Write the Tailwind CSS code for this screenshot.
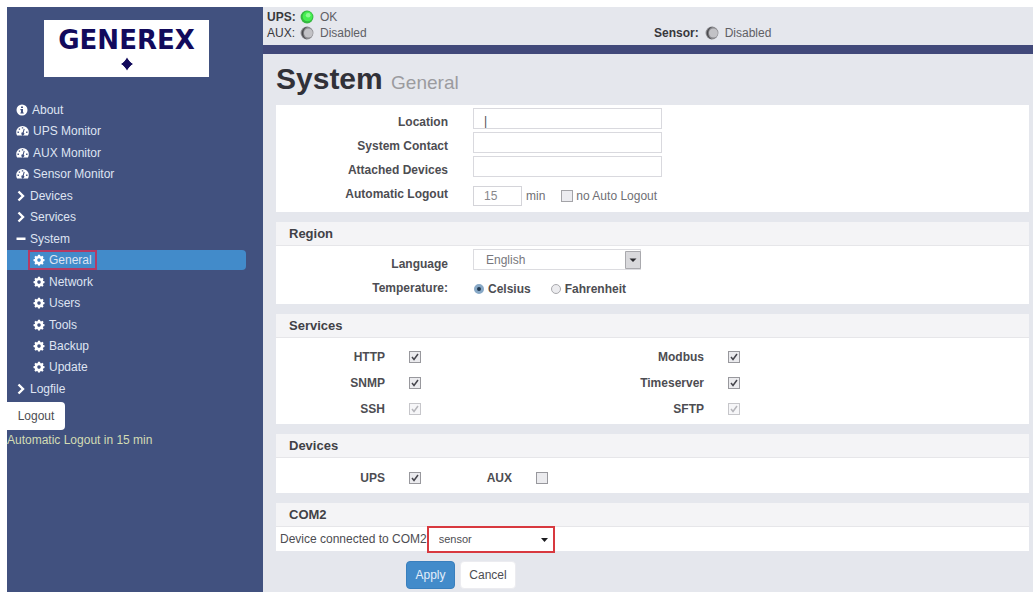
<!DOCTYPE html>
<html lang="en">
<head>
  <meta charset="UTF-8" />
  <meta name="viewport" content="width=device-width, initial-scale=1.0"/>
  <title>System - General</title>
  <script src="https://cdn.jsdelivr.net/npm/@tailwindcss/browser@4"></script>
</head>
<body class="bg-white min-h-screen flex pl-[7px] pt-[7px] pr-[2px] text-[12px] leading-4 text-[#4d4d52] font-['Liberation_Sans',Arial,sans-serif]">

  <!-- icons shared by the menu -->
  <svg class="hidden">
    <symbol id="info" viewBox="0 0 12 12"><path fill-rule="evenodd" d="M6 .5a5.5 5.5 0 1 0 0 11a5.5 5.5 0 0 0 0-11zM5 2.4h2v1.6H5zM4.4 5H7v3.4h.7v1.2H4.4V8.400H5V6.200h-.6z"/></symbol>
    <symbol id="gauge" viewBox="0 0 13 12"><path fill-rule="evenodd" d="M6.500 1A6.300 6.300 0 0 0 .2 7.300c0 1.200.3 2.300.9 3.200h10.800c.6-.9.9-2 .9-3.200A6.300 6.300 0 0 0 6.500 1zM5.800 2.200h1.400v1.400H5.800zM2.800 3.500h1.300v1.300H2.800zM1.500 6.600h1.400V8H1.500zM10.100 6.600h1.400V8h-1.400zM7.700 3.700l1 .3-1 3.600a1.500 1.500 0 1 1-1-.3z"/></symbol>
    <symbol id="chevron" viewBox="0 0 10 12"><path d="M2.500 1.500L7 6l-4.500 4.500" fill="none" stroke="currentColor" stroke-width="2.400"/></symbol>
    <symbol id="minus" viewBox="0 0 10 12"><path d="M.5 4.500h9v2.500h-9z"/></symbol>
    <symbol id="cog" viewBox="0 0 12 12"><path fill-rule="evenodd" d="M5 .8h2l.3 1.300.8.300 1.200-.7 1.300 1.300-.7 1.200.3.800 1.300.3v1.800l-1.300.3-.3.800.7 1.200-1.300 1.300-1.200-.7-.8.300L7 11.500H5l-.3-1.200-.8-.3-1.200.7-1.300-1.300.7-1.200-.3-.8L.5 7.100V5.300L1.800 5l.3-.8L1.400 3l1.300-1.300 1.200.7.800-.3zM6 4.300a1.800 1.800 0 1 0 0 3.600a1.800 1.800 0 0 0 0-3.600z"/></symbol>
    <symbol id="led" viewBox="0 0 12 12">
      <circle cx="6" cy="6" r="5.500" fill="#8a8a8e"/>
      <path d="M6.500.6A5.500 5.500 0 0 0 6 11.500A6 6 0 0 1 6.500.6z" fill="#4a4a4e"/>
      <circle cx="7.200" cy="6" r="3.800" fill="#c2c2c6"/>
    </symbol>
  </svg>

  <!-- sidebar -->
  <aside class="w-64 shrink-0 bg-[#41517f] text-[#dfe4f2]">
    <div class="ml-[37px] mt-[13px] w-[165px] h-[57px] pt-2 bg-white text-[#120a5c] flex flex-col items-center">
      <div class="text-[26px] leading-6 font-bold font-['DejaVu_Sans',sans-serif]">GENEREX</div>
      <svg class="mt-[5px] w-3 h-[14px]" viewBox="0 0 12 14" fill="currentColor"><path d="M6 .5C7 3 9 5.500 12 7C9 8.500 7 11 6 13.500C5 11 3 8.500 0 7C3 5.500 5 3 6 .5z"/><path d="M6 1.500L11 7L6 12.500L1 7z"/></svg>
    </div>

    <nav class="mt-[23px]">
      <ul class="h-[299px] flex flex-col justify-between [&_a]:flex [&_a]:items-center [&_a]:h-5 [&_svg]:fill-current [&_svg]:text-white [&_svg]:h-3">
        <li><a href="#" class="pl-[9px] gap-1"><svg class="w-3"><use href="#info"/></svg>About</a></li>
        <li><a href="#" class="pl-[9px] gap-1"><svg class="w-[13px]"><use href="#gauge"/></svg>UPS Monitor</a></li>
        <li><a href="#" class="pl-[9px] gap-1"><svg class="w-[13px]"><use href="#gauge"/></svg>AUX Monitor</a></li>
        <li><a href="#" class="pl-[9px] gap-1"><svg class="w-[13px]"><use href="#gauge"/></svg>Sensor Monitor</a></li>
        <li><a href="#" class="pl-[9px] gap-1"><svg class="w-[10px]"><use href="#chevron"/></svg>Devices</a></li>
        <li><a href="#" class="pl-[9px] gap-1"><svg class="w-[10px]"><use href="#chevron"/></svg>Services</a></li>
        <li><a href="#" class="pl-[9px] gap-1"><svg class="w-[10px]"><use href="#minus"/></svg>System</a></li>
        <li class="mr-[17px] pl-[21px] bg-[#428bca] rounded-r"><a href="#" class="w-[69px] pl-[3px] gap-1 border-2 border-[#b43a64]"><svg class="w-3 shrink-0"><use href="#cog"/></svg>General</a></li>
        <li><a href="#" class="pl-[26px] gap-1"><svg class="w-3"><use href="#cog"/></svg>Network</a></li>
        <li><a href="#" class="pl-[26px] gap-1"><svg class="w-3"><use href="#cog"/></svg>Users</a></li>
        <li><a href="#" class="pl-[26px] gap-1"><svg class="w-3"><use href="#cog"/></svg>Tools</a></li>
        <li><a href="#" class="pl-[26px] gap-1"><svg class="w-3"><use href="#cog"/></svg>Backup</a></li>
        <li><a href="#" class="pl-[26px] gap-1"><svg class="w-3"><use href="#cog"/></svg>Update</a></li>
        <li><a href="#" class="pl-[9px] gap-1"><svg class="w-[10px]"><use href="#chevron"/></svg>Logfile</a></li>
      </ul>
    </nav>
    <button class="mt-[3px] w-[58px] h-7 bg-white rounded-r-sm text-[#4d4d52]">Logout</button>
    <p class="mt-0.5 text-[#d3dcb4]">Automatic Logout in 15 min</p>
  </aside>

  <div class="flex-1 flex flex-col bg-[#e5e7ed]">
    <!-- status bar -->
    <header class="h-[47px] pl-1 pt-[2px] border-b-9 border-[#41497a] grid grid-cols-[387px_1fr] content-start text-[#606065]">
      <div class="flex items-center gap-1.5">
        <b class="w-[27px] text-[#38383c]">UPS:</b>
        <svg class="w-3.5 h-3.5" viewBox="0 0 12 12"><circle cx="6" cy="6" r="5.500" fill="#35b840"/><circle cx="6.500" cy="5.500" r="4.200" fill="#45ee50"/><circle cx="7" cy="4.500" r="2" fill="#8dfa92"/></svg>
        OK
      </div>
      <div></div>
      <div class="flex items-center gap-1.5">
        <span class="w-[27px] text-[#38383c]">AUX:</span>
        <svg class="w-3.5 h-3.5"><use href="#led"/></svg>
        Disabled
      </div>
      <div class="flex items-center gap-1.5">
        <b class="text-[#38383c]">Sensor:</b>
        <svg class="w-3.5 h-3.5"><use href="#led"/></svg>
        Disabled
      </div>
    </header>

    <main class="pl-[13px] pr-1">
      <h1 class="pt-2 h-[51px] text-[30px] leading-[34px] font-bold text-[#313138]">System <small class="text-[19px] font-normal text-[#9b9b9f]">General</small></h1>

      <form class="flex flex-col gap-[10px] [&_section]:bg-white [&_h2]:h-6 [&_h2]:pl-[13px] [&_h2]:bg-[#f4f4f6] [&_h2]:border-b [&_h2]:border-[#e6e6e9] [&_h2]:text-[13px] [&_h2]:leading-[23px] [&_h2]:font-bold [&_h2]:text-[#414146]">
        <section class="h-[107px] pt-[3px] grid grid-cols-[172px_1fr] auto-rows-[24px] gap-x-[25px] items-start">
          <label for="location" class="pt-1.5 text-right font-bold">Location</label>
          <input id="location" type="text" value="|" class="w-[189px] h-[21px] px-2.5 pt-1 border border-[#d9d9de] bg-white">
          <label for="contact" class="pt-1.5 text-right font-bold">System Contact</label>
          <input id="contact" type="text" class="w-[189px] h-[21px] px-2.5 border border-[#d9d9de] bg-white">
          <label for="attached" class="pt-1.5 text-right font-bold">Attached Devices</label>
          <input id="attached" type="text" class="w-[189px] h-[21px] px-2.5 border border-[#d9d9de] bg-white">
          <label for="logout" class="pt-1.5 text-right font-bold">Automatic Logout</label>
          <div class="pt-1.5 flex items-center text-[#6f6f74]">
            <input id="logout" type="text" value="15" class="w-[49px] h-5 px-2.5 border border-[#d4d4d9] bg-white text-[#88888c]">
            <span class="ml-1">min</span>
            <input id="noauto" type="checkbox" class="ml-4 appearance-none w-3 h-3 border border-[#a4a4a8] bg-[#ececf0]">
            <label for="noauto" class="ml-[3px]">no Auto Logout</label>
          </div>
        </section>

        <section>
          <h2>Region</h2>
          <div class="h-[58px] pt-[3px] grid grid-cols-[172px_1fr] auto-rows-[24px] gap-x-[25px] items-start">
            <label for="language" class="pt-[7px] text-right font-bold">Language</label>
            <div class="relative w-[168px]">
              <select id="language" class="appearance-none w-full h-[21px] pl-3 border border-[#dcdce0] bg-white text-[#77777c]">
                <option>English</option>
              </select>
              <svg class="absolute right-0 top-0.5 w-4 h-[18px] pointer-events-none" viewBox="0 0 16 18"><path d="M.5.5h15v17H.5z" fill="#d9d9dc" stroke="#a9a9ad"/><path d="M4.500 7.500h7L8 11z" fill="#2b2b2f"/></svg>
            </div>
            <span class="pt-[7px] text-right font-bold">Temperature:</span>
            <div class="pt-2 flex items-center font-bold">
              <input id="celsius" type="radio" name="temp" checked class="ml-px appearance-none w-2.5 h-2.5 rounded-full border border-[#a7b4c2] bg-[#dfe9f2] checked:border-3 checked:bg-[#20384f] checked:border-[#87a8c6]">
              <label for="celsius" class="ml-1">Celsius</label>
              <input id="fahrenheit" type="radio" name="temp" class="ml-5 appearance-none w-2.5 h-2.5 rounded-full border border-[#a9a9ad] bg-[#ececef]">
              <label for="fahrenheit" class="ml-1">Fahrenheit</label>
            </div>
          </div>
        </section>

        <section>
          <h2>Services</h2>
          <div class="h-[86px] pt-1.5 grid grid-cols-[109px_12px_259px_12px] auto-rows-[26px] gap-x-6 items-center [&_label]:text-right [&_label]:font-bold">
            <label for="http">HTTP</label>
            <span class="relative w-3 h-3"><input id="http" type="checkbox" checked class="block appearance-none w-3 h-3 border border-[#98989d] bg-[#ebebee]"><svg class="absolute inset-0 w-3 h-3 pointer-events-none" viewBox="0 0 12 12"><path d="M3 6l2 2.500L9 3" fill="none" stroke="#45454c" stroke-width="1.500"/></svg></span>
            <label for="modbus">Modbus</label>
            <span class="relative w-3 h-3"><input id="modbus" type="checkbox" checked class="block appearance-none w-3 h-3 border border-[#98989d] bg-[#ebebee]"><svg class="absolute inset-0 w-3 h-3 pointer-events-none" viewBox="0 0 12 12"><path d="M3 6l2 2.500L9 3" fill="none" stroke="#45454c" stroke-width="1.500"/></svg></span>
            <label for="snmp">SNMP</label>
            <span class="relative w-3 h-3"><input id="snmp" type="checkbox" checked class="block appearance-none w-3 h-3 border border-[#98989d] bg-[#ebebee]"><svg class="absolute inset-0 w-3 h-3 pointer-events-none" viewBox="0 0 12 12"><path d="M3 6l2 2.500L9 3" fill="none" stroke="#45454c" stroke-width="1.500"/></svg></span>
            <label for="timeserver">Timeserver</label>
            <span class="relative w-3 h-3"><input id="timeserver" type="checkbox" checked class="block appearance-none w-3 h-3 border border-[#98989d] bg-[#ebebee]"><svg class="absolute inset-0 w-3 h-3 pointer-events-none" viewBox="0 0 12 12"><path d="M3 6l2 2.500L9 3" fill="none" stroke="#45454c" stroke-width="1.500"/></svg></span>
            <label for="ssh">SSH</label>
            <span class="relative w-3 h-3"><input id="ssh" type="checkbox" checked disabled class="block appearance-none w-3 h-3 border border-[#c6c6ca] bg-[#f6f6f8]"><svg class="absolute inset-0 w-3 h-3 pointer-events-none" viewBox="0 0 12 12"><path d="M3 6l2 2.500L9 3" fill="none" stroke="#b5b5ba" stroke-width="1.500"/></svg></span>
            <label for="sftp">SFTP</label>
            <span class="relative w-3 h-3"><input id="sftp" type="checkbox" checked disabled class="block appearance-none w-3 h-3 border border-[#c6c6ca] bg-[#f6f6f8]"><svg class="absolute inset-0 w-3 h-3 pointer-events-none" viewBox="0 0 12 12"><path d="M3 6l2 2.500L9 3" fill="none" stroke="#b5b5ba" stroke-width="1.500"/></svg></span>
          </div>
        </section>

        <section>
          <h2>Devices</h2>
          <div class="h-[35px] pt-1 grid grid-cols-[109px_12px_67px_12px] gap-x-6 items-center [&_label]:text-right [&_label]:font-bold">
            <label for="ups">UPS</label>
            <span class="relative w-3 h-3"><input id="ups" type="checkbox" checked class="block appearance-none w-3 h-3 border border-[#98989d] bg-[#ebebee]"><svg class="absolute inset-0 w-3 h-3 pointer-events-none" viewBox="0 0 12 12"><path d="M3 6l2 2.500L9 3" fill="none" stroke="#45454c" stroke-width="1.500"/></svg></span>
            <label for="aux">AUX</label>
            <input id="aux" type="checkbox" class="appearance-none w-3 h-3 border border-[#98989d] bg-[#ebebee]">
          </div>
        </section>

        <section>
          <h2>COM2</h2>
          <div class="h-6 pl-1 flex items-center">
            <label for="com2">Device connected to COM2</label>
            <div class="relative w-32">
              <select id="com2" class="appearance-none block w-full h-[27px] pl-2.5 border-2 border-[#d8393f] bg-white text-[11px]">
                <option>sensor</option>
              </select>
              <svg class="absolute right-[7px] top-3 w-[7px] h-1 pointer-events-none" viewBox="0 0 7 4"><path d="M0 0h7L3.500 4z" fill="#1c1c20"/></svg>
            </div>
          </div>
        </section>

        <div class="pl-[130px] flex gap-[5px]">
          <button type="submit" class="w-[49px] h-7 bg-[#428bca] border border-[#397fbd] rounded-sm text-[#e4eefa]">Apply</button>
          <button type="button" class="w-14 h-7 bg-white border border-[#ececf0] rounded-sm">Cancel</button>
        </div>
      </form>
    </main>
  </div>

</body>
</html>
